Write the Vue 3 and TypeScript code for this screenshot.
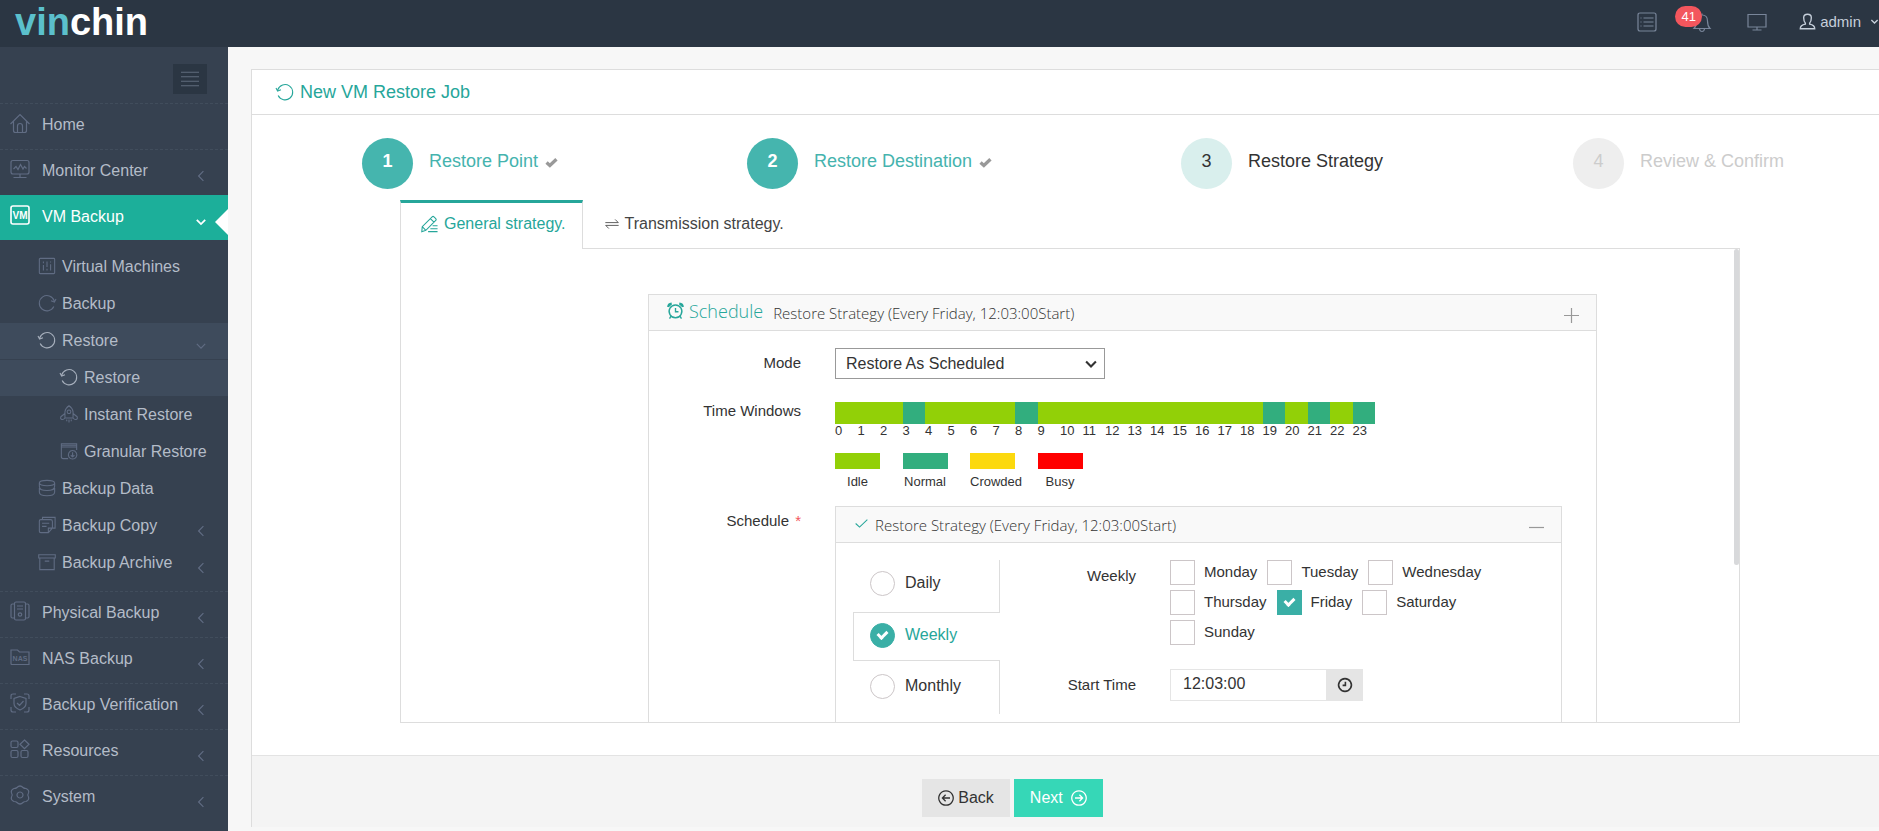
<script setup lang="ts">
import { h, ref } from 'vue'
import type { FunctionalComponent } from 'vue'

interface Glyph {
  d: string
  text?: string
}

const glyphs: Record<string, Glyph> = {
  home: { d: 'M0.5 11 L10 1.500 L19.500 11 M3.5 8.5 V17.500 Q3.5 19.500 5.5 19.500 H14.5 Q16.5 19.500 16.5 17.500 V8.5 M7.5 19.500 V13 Q7.5 10.5 10 10.5 Q12.5 10.5 12.5 13 V19.500' },
  monitor: { d: 'M3 1.5 H17 Q19 1.5 19 3.5 V13 Q19 15 17 15 H3 Q1 15 1 13 V3.5 Q1 1.5 3 1.5 Z M3.5 10 L6 7.5 L8 10.5 L10.5 5.5 L13 10 L14.5 7.5 L16.5 9.5 M10 15 V18 M3.5 18.5 H16.5' },
  vm: { d: 'M3 1 H17 Q19 1 19 3 V17 Q19 19 17 19 H3 Q1 19 1 17 V3 Q1 1 3 1 Z', text: 'VM' },
  machines: { d: 'M2.5 1.5 H17.5 Q18.5 1.5 18.5 2.5 V17.5 Q18.5 18.5 17.5 18.5 H2.5 Q1.5 18.5 1.5 17.5 V2.5 Q1.5 1.5 2.5 1.5 Z M6 5 V7 M6 9 V15 M10 5 V11 M10 13 V15 M14 5 V6 M14 8 V15' },
  backup: { d: 'M17.6 14 A8.5 8.5 0 1 1 18 7.5 M14.5 7.5 L18.2 9 L20 5.5' },
  restore: { d: 'M2.4 14 A8.5 8.5 0 1 0 2 7.5 M5.5 7.5 L1.8 9 L0 5.5' },
  rocket: { d: 'M5.500 14.500 V7.500 Q6 3.500 10 0.800 Q14 3.500 14.500 7.500 V14.500 Z M5.500 9.500 L1 13 Q0 15.500 2 16 Q4 16.500 5.500 14.500 M14.500 9.500 L19 13 Q20 15.500 18 16 Q16 16.500 14.500 14.500 M7.500 16 V18 M12.500 16 V18 M10 16 V19.500 M10 5.500 A2 2 0 1 1 9.990 5.500' },
  granular: { d: 'M9 18.500 H3.500 Q1.500 18.500 1.500 16.500 V2 H18.500 V9 M1.500 5.500 H18.500 M1.500 3.700 H18.500 M14 9.500 A4.700 4.700 0 1 1 13.990 9.500 M14 11.500 V16.500 M12 14.700 L14 16.500 L16 14.700' },
  data: { d: 'M10 1.500 C15 1.500 18.500 2.800 18.500 4.500 C18.500 6.300 15 7.500 10 7.500 C5 7.500 1.500 6.300 1.500 4.500 C1.500 2.800 5 1.500 10 1.500 M1.500 4.500 V8 C1.500 12 5 12.700 10 12.700 C15 12.700 18.500 12 18.500 8 V4.500 M1.500 10 V14.500 C1.500 18 5 18.700 10 18.700 C15 18.700 18.500 18 18.500 14.500 V10' },
  copy: { d: 'M5 4 V1.500 H19 V13.500 H16.500 M3 4 H14 Q16 4 16 6 V13.500 L11.500 18.500 H3 Q1.500 18.500 1.500 17 V5.500 Q1.500 4 3 4 M11.500 18.500 V13.500 H16 M4.500 8 H12.500 M4.500 11.500 H9.500' },
  archive: { d: 'M0.800 2 H19.200 V5.500 H0.800 Z M2 5.500 V18.500 H18 V5.500 M7.500 9 H12.500' },
  physical: { d: 'M6 1 H14 Q15.500 1 15.500 2.500 V17.500 Q15.500 19 14 19 H6 Q4.500 19 4.500 17.500 V2.500 Q4.500 1 6 1 Z M4.500 3 H2.500 Q1 3 1 4.500 V15.500 Q1 17 2.500 17 H4.500 M15.500 3 H17.500 Q19 3 19 4.500 V15.500 Q19 17 17.500 17 H15.500 M7 5 H13 M7 8 H13 M10 11.800 A1.700 1.700 0 1 1 9.990 11.800' },
  nas: { d: 'M1 3 H7.500 L9.500 5 H19 V17.500 H2 Q1 17.500 1 16.500 Z', text: 'NAS' },
  verify: { d: 'M1 6 V3 Q1 1 3 1 H6 M14 1 H17 Q19 1 19 3 V6 M19 14 V17 Q19 19 17 19 H14 M6 19 H3 Q1 19 1 17 V14 M10 3.500 L16 5.500 V10.500 Q16 14.500 10 17 Q4 14.500 4 10.500 V5.500 Z M7 10 L9.500 12.300 L13.500 8' },
  resources: { d: 'M2.500 2 H6.500 Q8 2 8 3.500 V7 Q8 8.500 6.500 8.500 H2.500 Q1 8.500 1 7 V3.500 Q1 2 2.500 2 Z M2.500 11.500 H6.500 Q8 11.500 8 13 V17 Q8 18.500 6.500 18.500 H2.500 Q1 18.500 1 17 V13 Q1 11.500 2.500 11.500 Z M12.500 11.500 H16.500 Q18 11.500 18 13 V17 Q18 18.500 16.500 18.500 H12.500 Q11 18.500 11 17 V13 Q11 11.500 12.500 11.500 Z M14.500 1 L19 5.300 L14.500 9.600 L10 5.300 Z' },
  system: { d: 'M7 2.500 Q10 -0.500 13 2.500 Q14 3.500 16 3.500 Q19.500 5 18.500 8 Q17 10 18.500 12 Q19.500 15 16 16.500 Q14 16.500 13 17.500 Q10 20.500 7 17.500 Q6 16.500 4 16.500 Q0.500 15 1.500 12 Q3 10 1.500 8 Q0.500 5 4 3.500 Q6 3.500 7 2.500 Z M10 7 A3 3 0 1 1 9.990 7' },
  list: { d: 'M3 1 H17 Q19 1 19 3 V17 Q19 19 17 19 H3 Q1 19 1 17 V3 Q1 1 3 1 Z M3.500 6 H4.500 M6.500 6 H16.500 M3.500 10 H4.500 M6.500 10 H16.500 M3.500 14 H4.500 M6.500 14 H16.500' },
  bell: { d: 'M10 1.500 V3 M2 16.500 Q4.500 14 4.500 9 Q4.500 3 10 3 Q15.500 3 15.500 9 Q15.500 14 18 16.500 Z M7.500 17 Q8 19.500 10 19.500 Q12 19.500 12.500 17' },
  screen: { d: 'M1 2.500 H19 V15 H1 Z M10 15 V18 M5.500 18 H14.500' },
  user: { d: 'M7.500 12 Q5.500 9.500 5.500 5.500 Q5.500 1.500 10 1.500 Q14.500 1.500 14.500 5.500 Q14.500 9.500 12.500 12 V13 Q18.500 14 18.500 18.500 H1.500 Q1.500 14 7.500 13 Z' },
  edit: { d: 'M2 18.500 L2.500 13 L13.500 2 Q14.500 1 15.500 2 L17.500 4 Q18.500 5 17.500 6 L6.500 17 Z M11.500 4 L15.500 8 M2.500 13 L6.500 17 M14 12 H19.500 M11.500 15.300 H19.500 M9 18.500 H19.500' },
  transfer: { d: 'M0.500 8 H19 L14.500 3.500 M19.500 12 H1 L5.500 16.500' },
  alarm: { d: 'M10 3.500 A7.500 7.500 0 1 1 9.990 3.500 M10 7 V11.500 H13.500 M1 6 Q1 2 5.500 1.500 M19 6 Q19 2 14.500 1.500 M1.500 5.500 L5.500 2 M18.500 5.500 L14.500 2 M4.500 17 L3 19.500 M15.500 17 L17 19.500' },
  tick: { d: 'M1 10 L7 15.500 L19 4' },
  clock: { d: 'M10 2 A8 8 0 1 1 9.990 2 M10.500 6 V10.500 H7' },
  back: { d: 'M10 1 A9 9 0 1 1 9.990 1 M15 10 H5.500 M9.500 6 L5.500 10 L9.500 14' },
  next: { d: 'M10 1 A9 9 0 1 1 9.990 1 M5 10 H14.500 M10.500 6 L14.500 10 L10.500 14' },
  left: { d: 'M14 2 L6 10 L14 18' },
  down: { d: 'M3 6.500 L10 13.500 L17 6.500' },
  plus: { d: 'M10 0 V20 M0 10 H20' },
  minus: { d: 'M0 10 H20' },
  bars: { d: 'M0 2.500 H20 M0 7.500 H20 M0 12.500 H20 M0 17.500 H20' },
}

const Icon: FunctionalComponent<{ name: string }> = (props) => {
  const glyph = glyphs[props.name]
  const children = [h('path', { d: glyph.d })]
  if (glyph.text) {
    children.push(
      h(
        'text',
        {
          x: 10,
          y: 13.5,
          'text-anchor': 'middle',
          'font-size': glyph.text === 'VM' ? 10 : 7,
          'font-weight': 700,
          'font-family': 'Liberation Sans, Arial, sans-serif',
          fill: 'currentColor',
          stroke: 'none',
        },
        glyph.text,
      ),
    )
  }
  return h('svg', { viewBox: '0 0 20 20', class: 'icon', 'aria-hidden': 'true' }, children)
}
Icon.props = ['name']

interface NavEntry {
  label: string
  icon: string
  arrow?: 'left' | 'down'
  active?: boolean
  children?: NavEntry[]
}

const nav: NavEntry[] = [
  { label: 'Home', icon: 'home' },
  { label: 'Monitor Center', icon: 'monitor', arrow: 'left' },
  {
    label: 'VM Backup',
    icon: 'vm',
    arrow: 'down',
    active: true,
    children: [
      { label: 'Virtual Machines', icon: 'machines' },
      { label: 'Backup', icon: 'backup' },
      {
        label: 'Restore',
        icon: 'restore',
        arrow: 'down',
        active: true,
        children: [
          { label: 'Restore', icon: 'restore', active: true },
          { label: 'Instant Restore', icon: 'rocket' },
          { label: 'Granular Restore', icon: 'granular' },
        ],
      },
      { label: 'Backup Data', icon: 'data' },
      { label: 'Backup Copy', icon: 'copy', arrow: 'left' },
      { label: 'Backup Archive', icon: 'archive', arrow: 'left' },
    ],
  },
  { label: 'Physical Backup', icon: 'physical', arrow: 'left' },
  { label: 'NAS Backup', icon: 'nas', arrow: 'left' },
  { label: 'Backup Verification', icon: 'verify', arrow: 'left' },
  { label: 'Resources', icon: 'resources', arrow: 'left' },
  { label: 'System', icon: 'system', arrow: 'left' },
]

const steps = [
  { label: 'Restore Point', state: 'done' },
  { label: 'Restore Destination', state: 'done' },
  { label: 'Restore Strategy', state: 'current' },
  { label: 'Review & Confirm', state: 'pending' },
]

const normalHours = [3, 8, 19, 21, 23]
const hours = Array.from({ length: 24 }, (_, hour) => ({
  hour,
  level: normalHours.includes(hour) ? 'normal' : 'idle',
}))

const legend = ['Idle', 'Normal', 'Crowded', 'Busy']
const frequencies = ['Daily', 'Weekly', 'Monthly']
const dayRows = [['Monday', 'Tuesday', 'Wednesday'], ['Thursday', 'Friday', 'Saturday'], ['Sunday']]

const frequency = ref('Weekly')
const days = ref<string[]>(['Friday'])
const startTime = ref('12:03:00')
const mode = ref('scheduled')
const summary = 'Restore Strategy (Every Friday, 12:03:00Start)'
</script>

<template>
  <div class="page">
    <header class="topbar">
      <a class="logo" href="#"><span class="logo-accent">vin</span>chin</a>
      <div class="tools">
        <button class="tool" type="button" aria-label="Tasks"><Icon name="list" /></button>
        <button class="tool alerts" type="button" aria-label="Alerts">
          <Icon name="bell" /><span class="badge">41</span>
        </button>
        <button class="tool" type="button" aria-label="Screen"><Icon name="screen" /></button>
        <button class="account" type="button"><Icon name="user" /><span>admin</span><Icon class="caret" name="down" /></button>
      </div>
    </header>

    <div class="body">
      <nav class="sidebar">
        <div class="toggle-row">
          <button class="toggle" type="button" aria-label="Toggle menu"><Icon name="bars" /></button>
        </div>
        <ul>
          <li v-for="item in nav" :key="item.label">
            <a href="#" class="nav-link" :class="{ active: item.active }">
              <Icon class="nav-icon" :name="item.icon" /><span>{{ item.label }}</span>
              <Icon v-if="item.arrow" class="arrow" :name="item.arrow" />
            </a>
            <ul v-if="item.children" class="sub">
              <li v-for="child in item.children" :key="child.label">
                <a href="#" class="sub-link" :class="{ open: child.active }">
                  <Icon class="nav-icon" :name="child.icon" /><span>{{ child.label }}</span>
                  <Icon v-if="child.arrow" class="arrow" :name="child.arrow" />
                </a>
                <ul v-if="child.children">
                  <li v-for="leaf in child.children" :key="leaf.label">
                    <a href="#" class="sub-link leaf" :class="{ open: leaf.active }">
                      <Icon class="nav-icon" :name="leaf.icon" /><span>{{ leaf.label }}</span>
                    </a>
                  </li>
                </ul>
              </li>
            </ul>
          </li>
        </ul>
      </nav>

      <main class="main">
        <section class="panel">
          <h1 class="title"><Icon name="restore" />New VM Restore Job</h1>

          <ol class="steps">
            <li v-for="(step, index) in steps" :key="step.label" class="step" :class="step.state">
              <span class="bubble">{{ index + 1 }}</span>
              <span class="step-label">{{ step.label }}</span>
              <Icon v-if="step.state === 'done'" class="step-tick" name="tick" />
            </li>
          </ol>

          <div class="tabbed">
            <div class="tabs" role="tablist">
              <button class="tab selected" type="button" role="tab" aria-selected="true"><Icon name="edit" />General strategy.</button>
              <button class="tab" type="button" role="tab" aria-selected="false"><Icon name="transfer" />Transmission strategy.</button>
            </div>

            <div class="pane">
              <div class="card outer">
                <div class="card-head">
                  <Icon class="alarm" name="alarm" />
                  <h2>Schedule</h2>
                  <span class="summary">{{ summary }}</span>
                  <button class="fold" type="button" aria-label="Expand"><Icon name="plus" /></button>
                </div>

                <div class="form">
                  <label class="label" for="mode">Mode</label>
                  <div class="select-box">
                    <select id="mode" v-model="mode">
                      <option value="scheduled">Restore As Scheduled</option>
                    </select>
                    <Icon name="down" />
                  </div>

                  <span class="label windows-label">Time Windows</span>
                  <div class="windows">
                    <div class="hours">
                      <div v-for="slot in hours" :key="slot.hour" class="hour">
                        <div class="cell" :class="slot.level"></div>
                        <span>{{ slot.hour }}</span>
                      </div>
                    </div>
                    <ul class="legend">
                      <li v-for="name in legend" :key="name">
                        <div class="swatch" :class="name.toLowerCase()"></div>
                        <span>{{ name }}</span>
                      </li>
                    </ul>
                  </div>

                  <span class="label schedule-label">Schedule <span class="required">*</span></span>
                  <div class="card inner">
                    <div class="card-head">
                      <Icon class="ok" name="tick" />
                      <span class="summary">{{ summary }}</span>
                      <button class="fold" type="button" aria-label="Collapse"><Icon name="minus" /></button>
                    </div>
                    <div class="planner">
                      <div class="frequencies">
                        <label v-for="name in frequencies" :key="name" class="frequency" :class="{ chosen: frequency === name }">
                          <input v-model="frequency" type="radio" name="frequency" :value="name" /><span>{{ name }}</span>
                        </label>
                      </div>
                      <div class="details">
                        <span class="label">Weekly</span>
                        <div class="days">
                          <div v-for="row in dayRows" :key="row[0]" class="day-row">
                            <label v-for="day in row" :key="day" class="day">
                              <input v-model="days" type="checkbox" :value="day" /><span>{{ day }}</span>
                            </label>
                          </div>
                        </div>
                        <label class="label" for="start">Start Time</label>
                        <div class="time">
                          <input id="start" v-model="startTime" type="text" />
                          <button type="button" aria-label="Pick a time"><Icon name="clock" /></button>
                        </div>
                      </div>
                    </div>
                  </div>
                </div>
              </div>
              <div class="thumb"></div>
            </div>
          </div>

          <footer class="actions">
            <button class="btn back" type="button"><Icon name="back" />Back</button>
            <button class="btn next" type="button">Next<Icon name="next" /></button>
          </footer>
        </section>
      </main>
    </div>
  </div>
</template>

<style>
body {
  margin: 0;
  background: #f7f7f7;
}
</style>

<style scoped>
* {
  box-sizing: border-box;
}

.page {
  display: flex;
  flex-direction: column;
  min-height: 100vh;
  font-family: 'Liberation Sans', Arial, sans-serif;
  font-size: 15px;
  color: #333;
}

ul,
ol {
  margin: 0;
  padding: 0;
  list-style: none;
}

a {
  text-decoration: none;
}

button,
input,
select {
  font: inherit;
  color: inherit;
  margin: 0;
}

button {
  padding: 0;
  border: 0;
  background: none;
}

.icon {
  flex: none;
  width: 20px;
  height: 20px;
  fill: none;
  stroke: currentColor;
  stroke-width: 1.2;
  overflow: visible;
}

/* Top bar */
.topbar {
  display: flex;
  align-items: center;
  justify-content: space-between;
  height: 47px;
  padding-left: 15px;
  background: #2b3643;
}

.logo {
  align-self: flex-start;
  font-size: 38px;
  font-weight: 700;
  line-height: 44px;
  color: #fff;
}

.logo-accent {
  color: #5bc0cc;
}

.tools {
  display: flex;
  align-items: center;
  padding-bottom: 4px;
}

.tool {
  position: relative;
  display: flex;
  margin-right: 35px;
  color: #79869a;
}

.tool:nth-child(3) {
  margin-right: 32px;
}

.badge {
  position: absolute;
  right: 10px;
  bottom: 5px;
  width: 27px;
  border-radius: 11px;
  background: #f3565d;
  color: #fff;
  font-size: 13px;
  line-height: 21px;
  text-align: center;
}

.account {
  display: flex;
  align-items: center;
  color: #c6cfda;
}

.account .icon {
  width: 17px;
  height: 17px;
  margin-right: 4px;
  stroke-width: 1.6;
}

.account .caret {
  width: 9px;
  height: 9px;
  margin: 0 0 0 9px;
  stroke-width: 3;
}

/* Sidebar */
.body {
  display: flex;
  flex: 1;
}

.sidebar {
  flex: none;
  width: 228px;
  background: #364150;
  font-size: 16px;
}

.toggle-row {
  display: flex;
  justify-content: flex-end;
  padding: 17px 21px 9px;
}

.toggle {
  display: flex;
  align-items: center;
  justify-content: center;
  width: 34px;
  height: 30px;
  background: #2b3643;
  color: #606c7d;
}

.toggle .icon {
  width: 18px;
  height: 18px;
}

.nav-link {
  position: relative;
  display: flex;
  align-items: center;
  gap: 12px;
  height: 46px;
  padding: 0 21px 3px 10px;
  border-top: 1px dashed #414d5c;
  color: #b4bcc8;
}

.nav-icon,
.arrow {
  color: #606c83;
}

.nav-link .nav-icon {
  margin-bottom: 4px;
}

.arrow {
  width: 12px;
  height: 12px;
  margin: 10px 0 0 auto;
  stroke-width: 2;
}

.nav-link.active {
  height: 45px;
  border-color: #1caf9a;
  background: #1caf9a;
  color: #fff;
}

.nav-link.active .icon {
  color: #fff;
  stroke-width: 1.6;
}

.nav-link.active .arrow {
  stroke-width: 3;
}

.nav-link.active::after {
  content: '';
  position: absolute;
  right: 0;
  top: 13px;
  border: 13px solid transparent;
  border-left: 0;
  border-right-color: #fff;
}

.sub {
  padding: 8px 0 10px;
}

.sub-link {
  display: flex;
  align-items: center;
  gap: 6px;
  height: 36px;
  margin-top: 1px;
  padding: 0 21px 1px 38px;
  color: #b4bcc8;
}

.sub-link .nav-icon {
  width: 18px;
  height: 18px;
  margin-bottom: 2px;
}

.leaf {
  padding-left: 60px;
}

.sub-link.open {
  background: #3e4b5c;
}

.sub-link.open .nav-icon {
  color: #a7b0bd;
}

/* Panel */
.main {
  flex: 1;
  min-width: 0;
  padding: 22px 0 0 23px;
  background: #f7f7f7;
}

.panel {
  border: 1px solid #ddd;
  border-width: 1px 0 0 1px;
  background: #fff;
}

.title {
  display: flex;
  align-items: center;
  gap: 6px;
  height: 45px;
  margin: 0;
  padding-left: 24px;
  border-bottom: 1px solid #ddd;
  font-size: 18px;
  font-weight: 400;
  color: #26a69a;
}

.title .icon {
  width: 18px;
  height: 18px;
}

.steps {
  display: flex;
  justify-content: space-around;
  padding: 23px 0 11px 15px;
  font-size: 18px;
}

.step {
  display: flex;
  line-height: 46px;
}

.bubble {
  width: 51px;
  height: 51px;
  margin-right: 16px;
  border-radius: 50%;
  text-align: center;
}

.done {
  color: #45b3ae;
}

.done .bubble {
  background: #45b5ae;
  color: #fff;
  font-weight: 700;
}

.current .bubble {
  background: #d9efed;
}

.pending {
  color: #ccc;
}

.pending .bubble {
  background: #eee;
}

.step-tick {
  width: 11px;
  height: 11px;
  margin: 19px 0 0 8px;
  color: #999;
  stroke-width: 6;
}

/* Tabs */
.tabbed {
  margin: 0 139px 0 148px;
}

.tabs {
  display: flex;
  margin-bottom: -1px;
}

.tab {
  position: relative;
  z-index: 1;
  display: flex;
  align-items: center;
  gap: 6px;
  height: 49px;
  padding: 0 22px 4px;
  border-top: 3px solid transparent;
  font-size: 16px;
  color: #444;
}

.tab .icon {
  width: 14px;
  height: 14px;
}

.tab.selected {
  padding: 0 16px 4px 19px;
  border-right: 1px solid #ddd;
  border-left: 1px solid #ddd;
  border-top-color: #26a69a;
  background: #fff;
  color: #26a69a;
}

.tab.selected .icon {
  width: 18px;
  height: 18px;
}

.pane {
  position: relative;
  height: 475px;
  padding: 45px 142px 0 247px;
  border: 1px solid #ddd;
  overflow: hidden;
}

.thumb {
  position: absolute;
  top: 0;
  right: 0;
  width: 5px;
  height: 316px;
  border-radius: 3px;
  background: #d8d9db;
}

/* Cards */
.card {
  border: 1px solid #ddd;
  background: #fff;
}

.card-head {
  display: flex;
  align-items: center;
  height: 36px;
  padding: 0 17px 0 18px;
  border-bottom: 1px solid #ddd;
  background: #f9f9f9;
  font-family: 'Open Sans', 'Noto Sans', sans-serif;
  font-weight: 300;
}

.card-head h2 {
  margin: 0 10px 0 5px;
  padding-bottom: 4px;
  font-size: 18px;
  font-weight: 300;
  color: #26a69a;
}

.card-head .icon {
  color: #26a69a;
}

.card-head .alarm {
  width: 17px;
  height: 17px;
  margin-bottom: 4px;
  stroke-width: 1.6;
}

.card-head .ok {
  width: 13px;
  height: 13px;
  margin: 0 7px 2px 1px;
  stroke-width: 1.6;
}

.summary {
  font-size: 15px;
}

.fold {
  display: flex;
  margin-left: auto;
  padding-top: 6px;
}

.card-head .fold .icon {
  width: 15px;
  height: 15px;
  stroke-width: 1.6;
  color: #999;
}

/* Form */
.form {
  display: grid;
  grid-template-columns: 152px 1fr;
  column-gap: 34px;
  padding: 17px 34px 60px 0;
}

.label {
  line-height: 30px;
  text-align: right;
}

.select-box {
  position: relative;
  display: flex;
  width: 270px;
}

.select-box select {
  width: 100%;
  height: 31px;
  padding: 0 10px;
  border: 1px solid #999;
  border-radius: 0;
  background: #fff;
  font-size: 16px;
  appearance: none;
}

.select-box .icon {
  position: absolute;
  top: 9px;
  right: 7px;
  width: 14px;
  height: 14px;
  stroke-width: 3;
  pointer-events: none;
}

.windows-label {
  padding-top: 17px;
}

.windows {
  padding-top: 23px;
  font-size: 13px;
}

.hours {
  display: grid;
  grid-template-columns: repeat(24, 1fr);
  width: 540px;
}

.cell {
  height: 22px;
}

.hour span {
  display: block;
  line-height: 14px;
}

.idle {
  background: #92d007;
}

.normal {
  background: #32ae7e;
}

.crowded {
  background: #fcd90e;
}

.busy {
  background: #f00;
}

.legend {
  display: grid;
  grid-template-columns: repeat(4, 1fr);
  width: 270px;
  margin-top: 15px;
}

.legend li {
  width: 45px;
  text-align: center;
}

.swatch {
  height: 16px;
  margin-bottom: 5px;
}

.legend span {
  display: block;
  line-height: 16px;
}

.schedule-label {
  padding-top: 16px;
}

.required {
  margin-left: 2px;
  color: #f3565d;
}

.inner {
  margin-top: 16px;
}

.planner {
  display: flex;
  padding: 17px 17px 40px;
}

.frequencies {
  width: 147px;
  font-size: 16px;
}

.frequency {
  display: flex;
  align-items: center;
  gap: 10px;
  height: 53px;
  padding: 0 0 3px 17px;
  border-right: 1px solid #ddd;
}

.frequency:first-child {
  height: 52px;
  padding-bottom: 6px;
}

.frequency.chosen {
  height: 49px;
  padding-left: 16px;
  border: 1px solid #ddd;
  border-right: 0;
  color: #26a69a;
}

input[type='radio'],
input[type='checkbox'] {
  position: relative;
  flex: none;
  width: 25px;
  height: 25px;
  border: 1px solid #ccc6c8;
  background: #fff;
  appearance: none;
}

input[type='radio'] {
  border-radius: 50%;
}

input[type='radio']:checked,
input[type='checkbox']:checked {
  border-color: #3aafa6;
  background: #3aafa6;
}

input:checked::after {
  content: '';
  position: absolute;
  inset: 5px 8px 8px;
  border: solid #fff;
  border-width: 0 3px 3px 0;
  transform: rotate(45deg);
}

.details {
  display: grid;
  grid-template-columns: 136px 1fr;
  column-gap: 34px;
  align-content: start;
  flex: 1;
}

.details .label {
  line-height: 31px;
}

.day-row {
  display: flex;
  gap: 10px;
  height: 30px;
}

.day {
  display: flex;
  align-items: center;
  gap: 9px;
  height: 25px;
}

.day span {
  padding-bottom: 2px;
}

.days {
  height: 109px;
}

.time {
  display: flex;
  width: 193px;
  height: 32px;
}

.time input {
  flex: 1;
  min-width: 0;
  padding: 0 12px 2px;
  border: 1px solid #e5e5e5;
  font-size: 16px;
}

.time button {
  display: flex;
  align-items: center;
  justify-content: center;
  width: 36px;
  background: #e5e5e5;
}

.time .icon {
  width: 16px;
  height: 16px;
  stroke-width: 2;
}

/* Footer */
.actions {
  display: flex;
  justify-content: center;
  gap: 4px;
  margin-top: 32px;
  padding: 23px 106px 10px 0;
  border-top: 1px solid #e3e3e3;
  background: #f4f4f4;
}

.btn {
  display: flex;
  align-items: center;
  height: 38px;
  padding: 0 16px;
  font-size: 16px;
}

.btn .icon {
  width: 16px;
  height: 16px;
  stroke-width: 1.6;
}

.back {
  gap: 4px;
  background: #e5e5e5;
}

.next {
  gap: 8px;
  background: #36d7b7;
  color: #fff;
}
</style>
